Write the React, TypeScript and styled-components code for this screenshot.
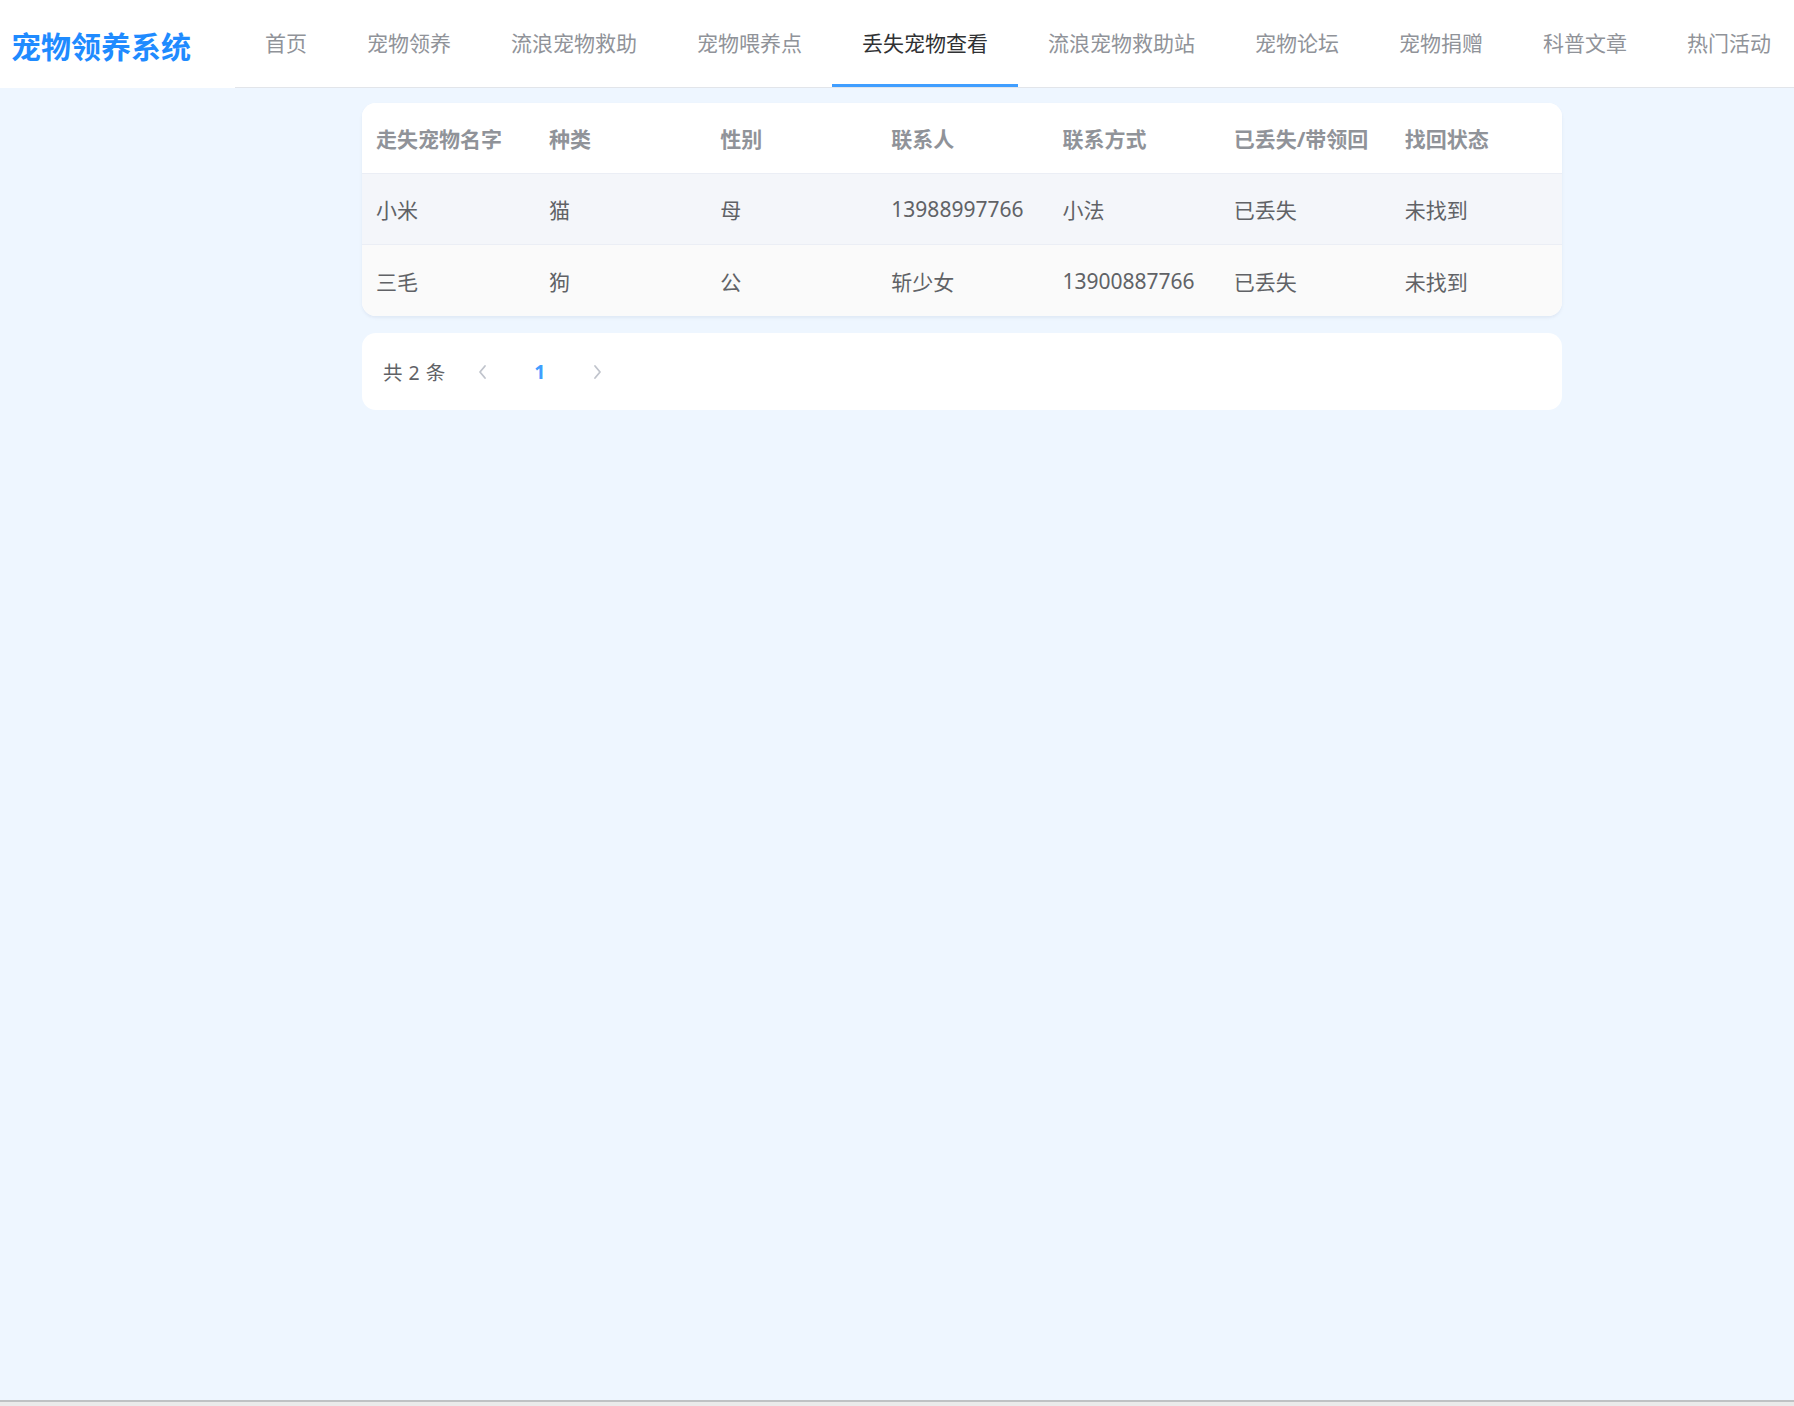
import React from 'react';
import styled, { createGlobalStyle } from 'styled-components';

const GlobalStyle = createGlobalStyle`
  html, body {
    margin: 0;
    padding: 0;
    overflow: hidden;
  }

  body {
    font-family: "Noto Sans", "Noto Sans CJK SC", sans-serif;
    background: #eef6ff;
  }
`;

const Page = styled.div`
  display: flex;
  flex-direction: column;
  min-height: 100vh;
`;

const Header = styled.header`
  display: flex;
  height: 88px;
  background: #fff;
  flex-shrink: 0;
`;

const Logo = styled.div`
  width: 235px;
  flex-shrink: 0;
  display: flex;
  align-items: center;
  padding: 1px 0 0 11px;
  box-sizing: border-box;
  font-size: 30px;
  font-weight: 700;
  color: #1f8bff;
`;

const Menu = styled.nav`
  display: flex;
  flex: 1;
  min-width: 0;
  border-bottom: 1px solid #e2e5ea;
  white-space: nowrap;
`;

const MenuItem = styled.div<{ active?: boolean }>`
  flex-shrink: 0;
  height: 87px;
  box-sizing: border-box;
  padding: 0 30px;
  display: flex;
  align-items: center;
  font-size: 21px;
  color: ${(p) => (p.active ? '#303133' : '#909399')};
  border-bottom: 3px solid ${(p) => (p.active ? '#409eff' : 'transparent')};
  margin-bottom: -1px;
  cursor: pointer;
`;

const Main = styled.main`
  flex: 1;
  background: #eef6ff;
`;

const Content = styled.div`
  width: 1200px;
  margin: 15px 0 0 362px;
  display: flex;
  flex-direction: column;
  gap: 17px;
`;

const TableCard = styled.div`
  background: #fff;
  border-radius: 14px;
  overflow: hidden;
  box-shadow: 0 2px 3px rgba(120, 140, 170, 0.12);
`;

const Row = styled.div<{ bg?: string }>`
  display: grid;
  grid-template-columns: 173px repeat(6, 1fr);
  height: 71px;
  box-sizing: border-box;
  background: ${(p) => p.bg || '#fff'};
  border-bottom: 1px solid #ebeef5;

  &:last-child {
    border-bottom: none;
  }
`;

const Cell = styled.div<{ head?: boolean }>`
  display: flex;
  align-items: center;
  padding-left: 14px;
  font-size: 21px;
  font-weight: ${(p) => (p.head ? 700 : 400)};
  color: ${(p) => (p.head ? '#909399' : '#606266')};
  white-space: nowrap;
`;

const PagerCard = styled.div`
  background: #fff;
  border-radius: 14px;
  height: 77px;
  display: flex;
  align-items: center;
  padding-left: 21px;
  box-sizing: border-box;
`;

const Total = styled.span`
  font-size: 19.5px;
  color: #606266;
  margin-right: 16px;
  word-spacing: 1px;
`;

const PageBtn = styled.button<{ current?: boolean }>`
  width: 43px;
  height: 43px;
  border: none;
  background: transparent;
  padding: 0;
  margin-right: 14px;
  display: flex;
  align-items: center;
  justify-content: center;
  font-family: inherit;
  font-size: 19.5px;
  font-weight: 700;
  color: ${(p) => (p.current ? '#409eff' : '#c0c4cc')};
  cursor: pointer;
`;

const BottomEdge = styled.div`
  height: 4px;
  flex-shrink: 0;
  border-top: 2px solid #bfc1c3;
  background: #eaeaea;
`;

const Chevron = ({ dir }: { dir: 'left' | 'right' }) => (
  <svg width="12" height="16" viewBox="0 0 12 16" fill="none">
    <path
      d={dir === 'left' ? 'M8 2 L3 8 L8 14' : 'M4 2 L9 8 L4 14'}
      stroke="#c0c4cc"
      strokeWidth="1.8"
      strokeLinecap="round"
      strokeLinejoin="round"
    />
  </svg>
);

const menu = [
  '首页',
  '宠物领养',
  '流浪宠物救助',
  '宠物喂养点',
  '丢失宠物查看',
  '流浪宠物救助站',
  '宠物论坛',
  '宠物捐赠',
  '科普文章',
  '热门活动',
];

const columns = ['走失宠物名字', '种类', '性别', '联系人', '联系方式', '已丢失/带领回', '找回状态'];

const rows = [
  ['小米', '猫', '母', '13988997766', '小法', '已丢失', '未找到'],
  ['三毛', '狗', '公', '斩少女', '13900887766', '已丢失', '未找到'],
];

const rowColors = ['#f4f6fa', '#fafafa'];

export default function App() {
  return (
    <Page>
      <GlobalStyle />
      <Header>
        <Logo>宠物领养系统</Logo>
        <Menu>
          {menu.map((m) => (
            <MenuItem key={m} active={m === '丢失宠物查看'}>
              {m}
            </MenuItem>
          ))}
        </Menu>
      </Header>
      <Main>
        <Content>
          <TableCard>
            <Row>
              {columns.map((c) => (
                <Cell head key={c}>
                  {c}
                </Cell>
              ))}
            </Row>
            {rows.map((r, i) => (
              <Row key={i} bg={rowColors[i]}>
                {r.map((v, j) => (
                  <Cell key={j}>{v}</Cell>
                ))}
              </Row>
            ))}
          </TableCard>
          <PagerCard>
            <Total>共 2 条</Total>
            <PageBtn>
              <Chevron dir="left" />
            </PageBtn>
            <PageBtn current>1</PageBtn>
            <PageBtn>
              <Chevron dir="right" />
            </PageBtn>
          </PagerCard>
        </Content>
      </Main>
      <BottomEdge />
    </Page>
  );
}
